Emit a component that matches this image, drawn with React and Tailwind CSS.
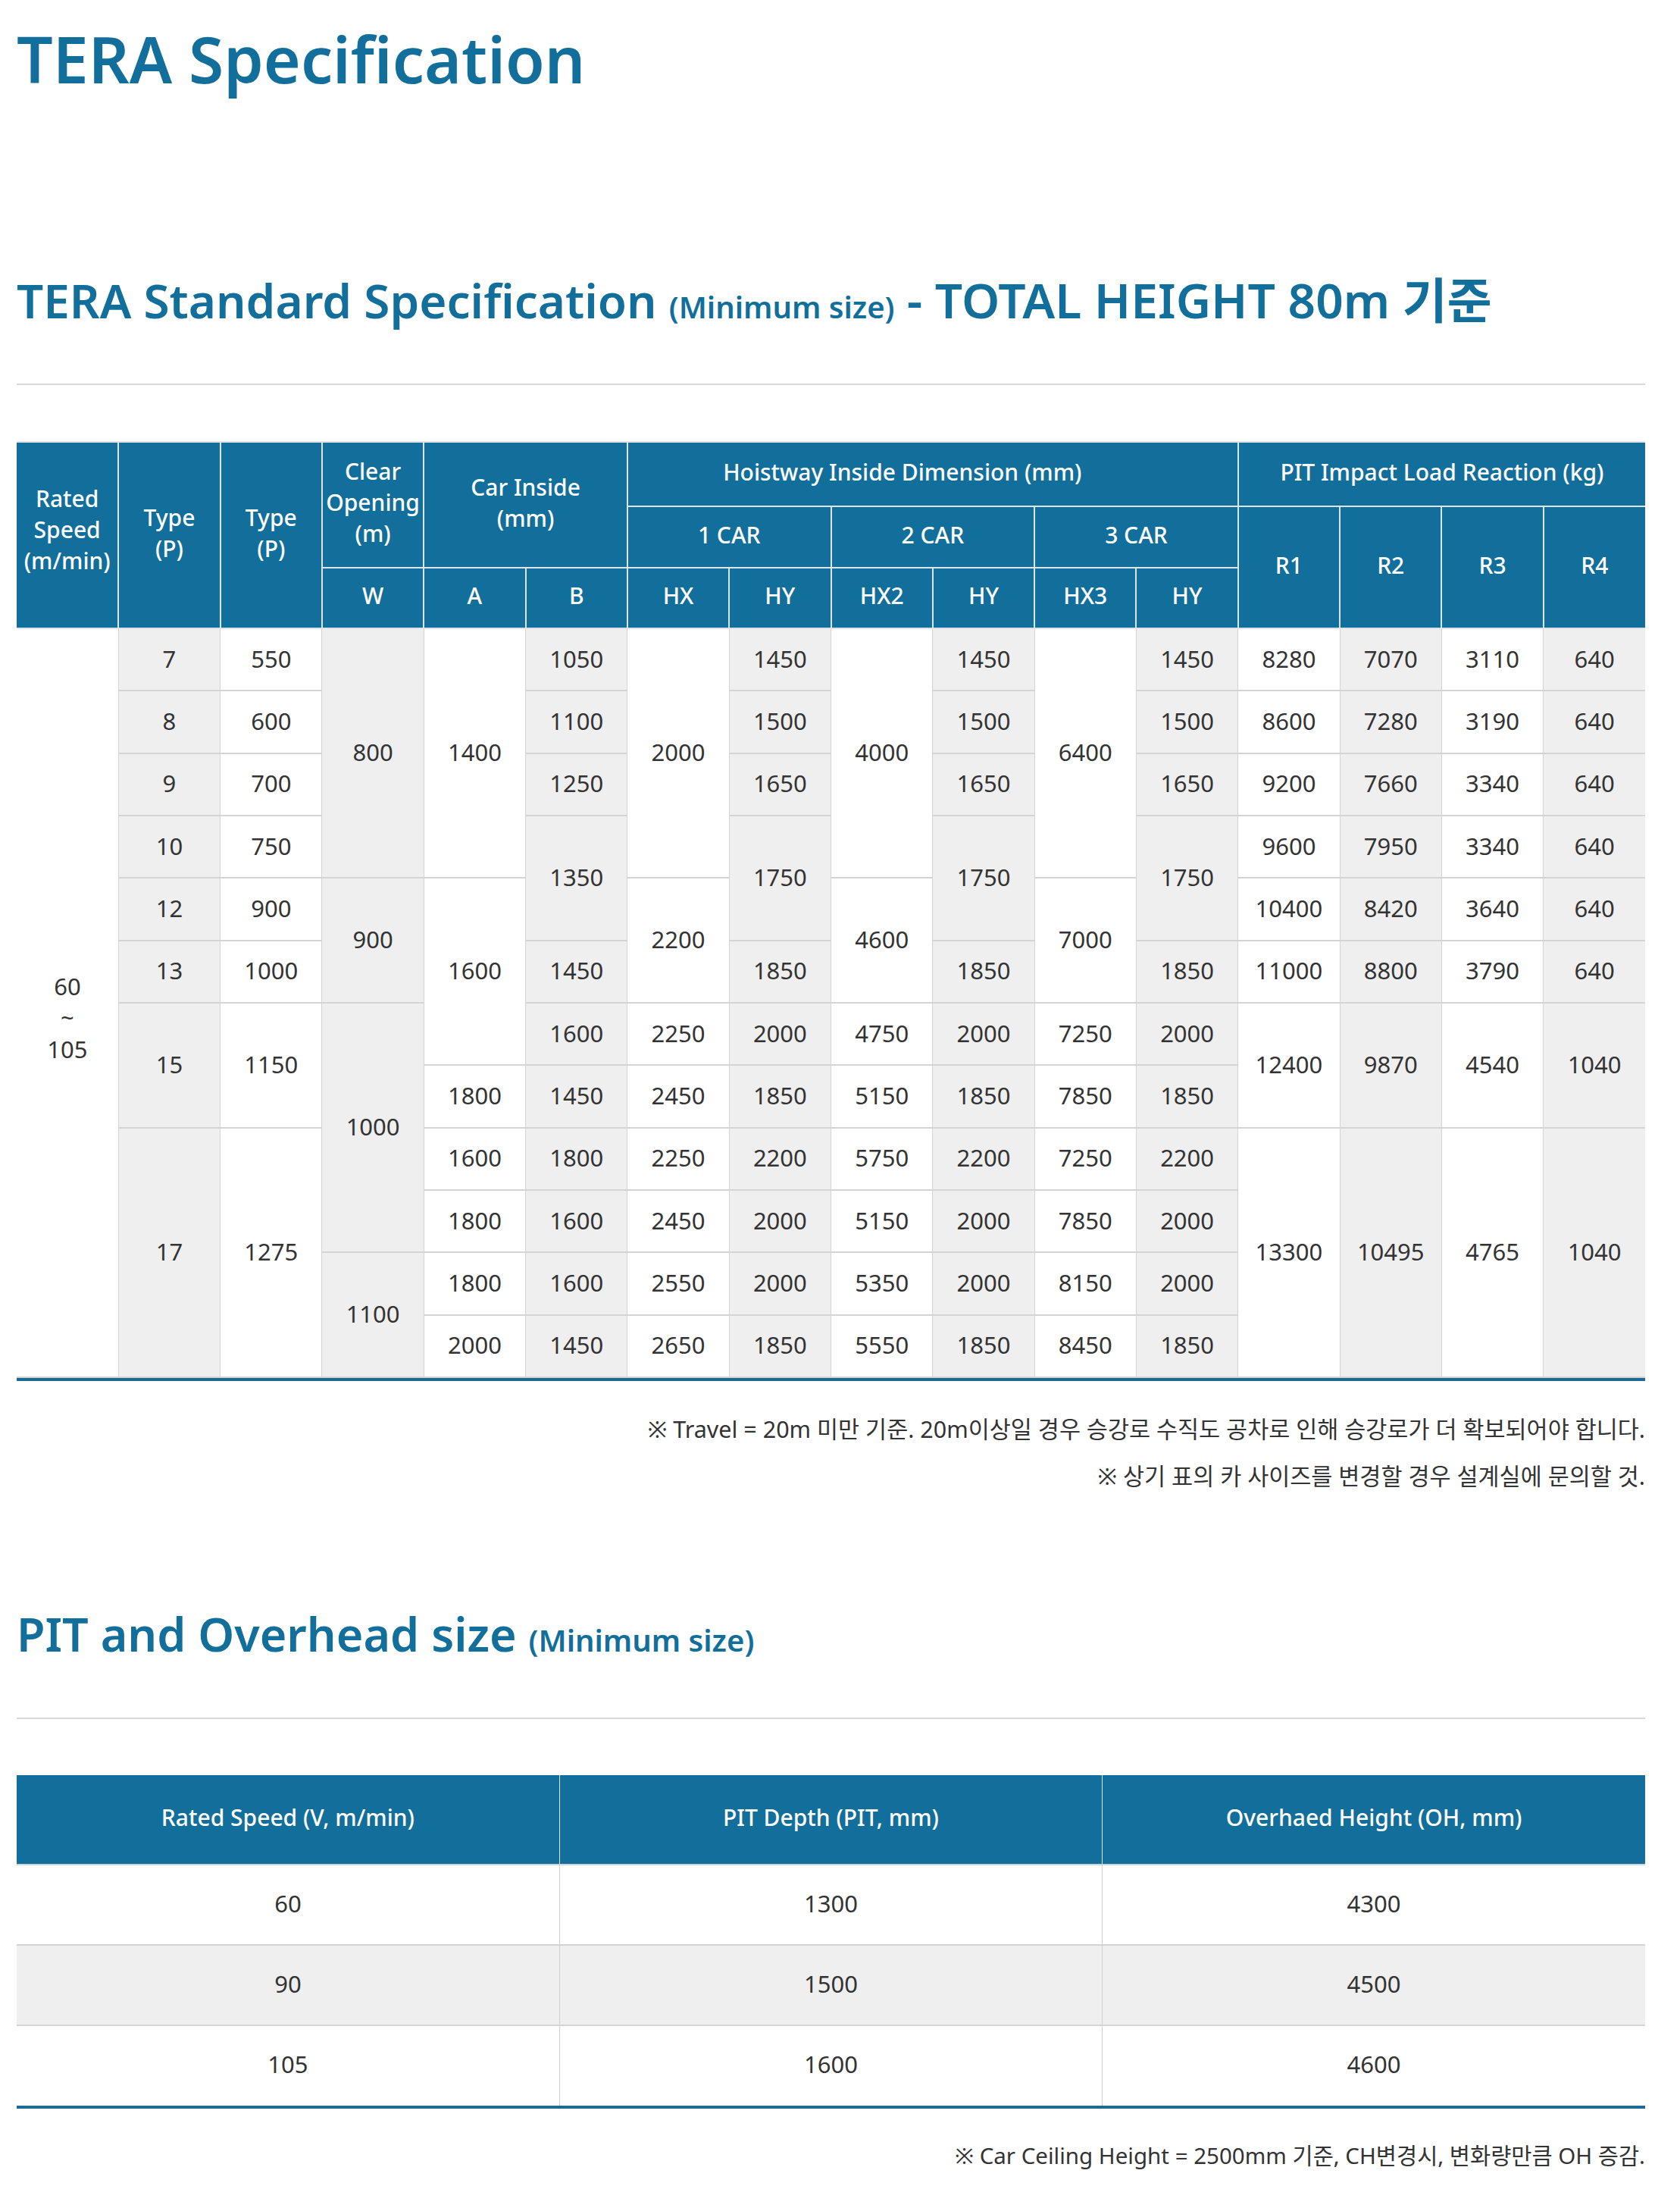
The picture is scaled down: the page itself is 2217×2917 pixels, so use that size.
import React from "react";

const BLUE = "bg-[#126e9a]";

const rows = [
  [["60~105", 1, 12], ["7", 2], ["550", 3], ["800", 4, 4], ["1400", 5, 4], ["1050", 6], ["2000", 7, 4], ["1450", 8], ["4000", 9, 4], ["1450", 10], ["6400", 11, 4], ["1450", 12], ["8280", 13], ["7070", 14], ["3110", 15], ["640", 16]],
  [["8", 2], ["600", 3], ["1100", 6], ["1500", 8], ["1500", 10], ["1500", 12], ["8600", 13], ["7280", 14], ["3190", 15], ["640", 16]],
  [["9", 2], ["700", 3], ["1250", 6], ["1650", 8], ["1650", 10], ["1650", 12], ["9200", 13], ["7660", 14], ["3340", 15], ["640", 16]],
  [["10", 2], ["750", 3], ["1350", 6, 2], ["1750", 8, 2], ["1750", 10, 2], ["1750", 12, 2], ["9600", 13], ["7950", 14], ["3340", 15], ["640", 16]],
  [["12", 2], ["900", 3], ["900", 4, 2], ["1600", 5, 3], ["2200", 7, 2], ["4600", 9, 2], ["7000", 11, 2], ["10400", 13], ["8420", 14], ["3640", 15], ["640", 16]],
  [["13", 2], ["1000", 3], ["1450", 6], ["1850", 8], ["1850", 10], ["1850", 12], ["11000", 13], ["8800", 14], ["3790", 15], ["640", 16]],
  [["15", 2, 2], ["1150", 3, 2], ["1000", 4, 4], ["1600", 6], ["2250", 7], ["2000", 8], ["4750", 9], ["2000", 10], ["7250", 11], ["2000", 12], ["12400", 13, 2], ["9870", 14, 2], ["4540", 15, 2], ["1040", 16, 2]],
  [["1800", 5], ["1450", 6], ["2450", 7], ["1850", 8], ["5150", 9], ["1850", 10], ["7850", 11], ["1850", 12]],
  [["17", 2, 4], ["1275", 3, 4], ["1600", 5], ["1800", 6], ["2250", 7], ["2200", 8], ["5750", 9], ["2200", 10], ["7250", 11], ["2200", 12], ["13300", 13, 4], ["10495", 14, 4], ["4765", 15, 4], ["1040", 16, 4]],
  [["1800", 5], ["1600", 6], ["2450", 7], ["2000", 8], ["5150", 9], ["2000", 10], ["7850", 11], ["2000", 12]],
  [["1100", 4, 2], ["1800", 5], ["1600", 6], ["2550", 7], ["2000", 8], ["5350", 9], ["2000", 10], ["8150", 11], ["2000", 12]],
  [["2000", 5], ["1450", 6], ["2650", 7], ["1850", 8], ["5550", 9], ["1850", 10], ["8450", 11], ["1850", 12]],
];

function H({ children, rs, cs, edge = "", pad = "pb-[7px]" }) {
  return (
    <th
      rowSpan={rs}
      colSpan={cs}
      className={`${BLUE} p-0 ${pad} text-center align-middle text-[30px] font-medium leading-[41px] text-white border-x-2 border-y-2 border-[#dde4ea] ${edge}`}
    >
      {children}
    </th>
  );
}

function Body({ text, col, rs }) {
  const gray = col % 2 === 0;
  const edge = col === 1 ? "border-l-0" : col === 16 ? "border-r-0" : "";
  if (text === "60~105") {
    return (
      <td rowSpan={rs} className={`bg-white p-0 pt-[40px] text-center align-middle text-[31px] leading-[41.5px] border-x border-y-2 border-[#d4d4d4] ${edge}`}>
        60
        <br />~<br />
        105
      </td>
    );
  }
  return (
    <td
      rowSpan={rs}
      className={`${gray ? "bg-[#efefef]" : "bg-white"} p-0 pb-[3px] text-center align-middle text-[31px] leading-[40px] border-x border-y-2 border-[#d4d4d4] ${edge}`}
    >
      {text}
    </td>
  );
}

export default function App() {
  return (
    <div className="min-h-screen bg-white font-['Noto_Sans','Noto_Sans_CJK_KR',sans-serif] text-[#333333]">
      <div className="ml-[22px] w-[2149px] pt-[28px] pb-[42px]">
        <h1 className="h-[100px] whitespace-nowrap text-[84px] font-semibold leading-[100px] text-[#126e9a]">
          TERA Specification
        </h1>

        <h2 className="mt-[228px] h-[80px] whitespace-nowrap text-[62px] font-semibold leading-[80px] text-[#126e9a]">
          TERA Standard Specification <span className="text-[40px]">(Minimum size)</span>{" "}
          <span className="text-[64px]">- TOTAL HEIGHT 80m 기준</span>
        </h2>
        <div className="mt-[70px] h-[2px] bg-[#d9d9d9]" />

        <div className="mt-[74px] border-b-4 border-[#1d6a93]">
          <table className="w-full table-fixed border-collapse">
            <colgroup>
              {Array.from({ length: 16 }).map((_, i) => (
                <col key={i} />
              ))}
            </colgroup>
            <thead>
              <tr className="h-[85px]">
                <H rs={3} edge="border-l-0" pad="pb-[16px]">
                  Rated
                  <br />
                  Speed
                  <br />
                  (m/min)
                </H>
                <H rs={3}>
                  Type
                  <br />
                  (P)
                </H>
                <H rs={3}>
                  Type
                  <br />
                  (P)
                </H>
                <H rs={2}>
                  Clear
                  <br />
                  Opening
                  <br />
                  (m)
                </H>
                <H rs={2} cs={2}>
                  Car Inside
                  <br />
                  (mm)
                </H>
                <H cs={6} pad="pb-[7px] pr-[80px]">
                  Hoistway Inside Dimension (mm)
                </H>
                <H cs={4} edge="border-r-0">
                  PIT Impact Load Reaction (kg)
                </H>
              </tr>
              <tr className="h-[81px]">
                <H cs={2}>1 CAR</H>
                <H cs={2}>2 CAR</H>
                <H cs={2}>3 CAR</H>
                <H rs={2}>R1</H>
                <H rs={2}>R2</H>
                <H rs={2}>R3</H>
                <H rs={2} edge="border-r-0">
                  R4
                </H>
              </tr>
              <tr className="h-[80px]">
                <H>W</H>
                <H>A</H>
                <H>B</H>
                <H>HX</H>
                <H>HY</H>
                <H>HX2</H>
                <H>HY</H>
                <H>HX3</H>
                <H>HY</H>
              </tr>
            </thead>
            <tbody>
              {rows.map((r, i) => (
                <tr key={i} className="h-[82.35px]">
                  {r.map(([t, c, rs], j) => (
                    <Body key={j} text={t} col={c} rs={rs} />
                  ))}
                </tr>
              ))}
            </tbody>
          </table>
        </div>

        <div className="mt-[32px] text-right text-[30.5px] leading-[62px] text-[#333333]">
          <p>※ Travel = 20m 미만 기준. 20m이상일 경우 승강로 수직도 공차로 인해 승강로가 더 확보되어야 합니다.</p>
          <p>※ 상기 표의 카 사이즈를 변경할 경우 설계실에 문의할 것.</p>
        </div>

        <h2 className="mt-[138px] h-[80px] whitespace-nowrap text-[61px] font-semibold leading-[80px] text-[#126e9a]">
          PIT and Overhead size <span className="text-[40px]">(Minimum size)</span>
        </h2>
        <div className="mt-[70px] h-[2px] bg-[#d9d9d9]" />

        <div className="mt-[74px] border-b-4 border-[#1d6a93]">
          <table className="w-full table-fixed border-collapse">
            <thead>
              <tr className="h-[118px]">
                {["Rated Speed (V, m/min)", "PIT Depth (PIT, mm)", "Overhaed Height (OH, mm)"].map((t, i) => (
                  <th
                    key={i}
                    className={`${BLUE} border-x border-b-2 border-x-[#dde4ea] border-b-[#cfd5da] p-0 pb-[6px] text-center align-middle text-[30px] font-medium text-white ${i === 0 ? "border-l-0" : ""} ${i === 2 ? "border-r-0" : ""}`}
                  >
                    {t}
                  </th>
                ))}
              </tr>
            </thead>
            <tbody>
              {[
                ["60", "1300", "4300"],
                ["90", "1500", "4500"],
                ["105", "1600", "4600"],
              ].map((r, i) => (
                <tr key={i} className={`h-[106px] ${i === 1 ? "bg-[#efefef]" : "bg-white"}`}>
                  {r.map((t, j) => (
                    <td
                      key={j}
                      className={`border-x border-y-2 border-x-[#d0d0d0] border-y-[#d4d4d4] p-0 pb-[4px] text-center align-middle text-[31px] ${j === 0 ? "border-l-0" : ""} ${j === 2 ? "border-r-0" : ""} ${i === 2 ? "border-b-0" : ""}`}
                    >
                      {t}
                    </td>
                  ))}
                </tr>
              ))}
            </tbody>
          </table>
        </div>

        <div className="mt-[32px] text-right text-[29.5px] leading-[60px] text-[#333333]">
          <p>※ Car Ceiling Height = 2500mm 기준, CH변경시, 변화량만큼 OH 증감.</p>
        </div>
      </div>
    </div>
  );
}
